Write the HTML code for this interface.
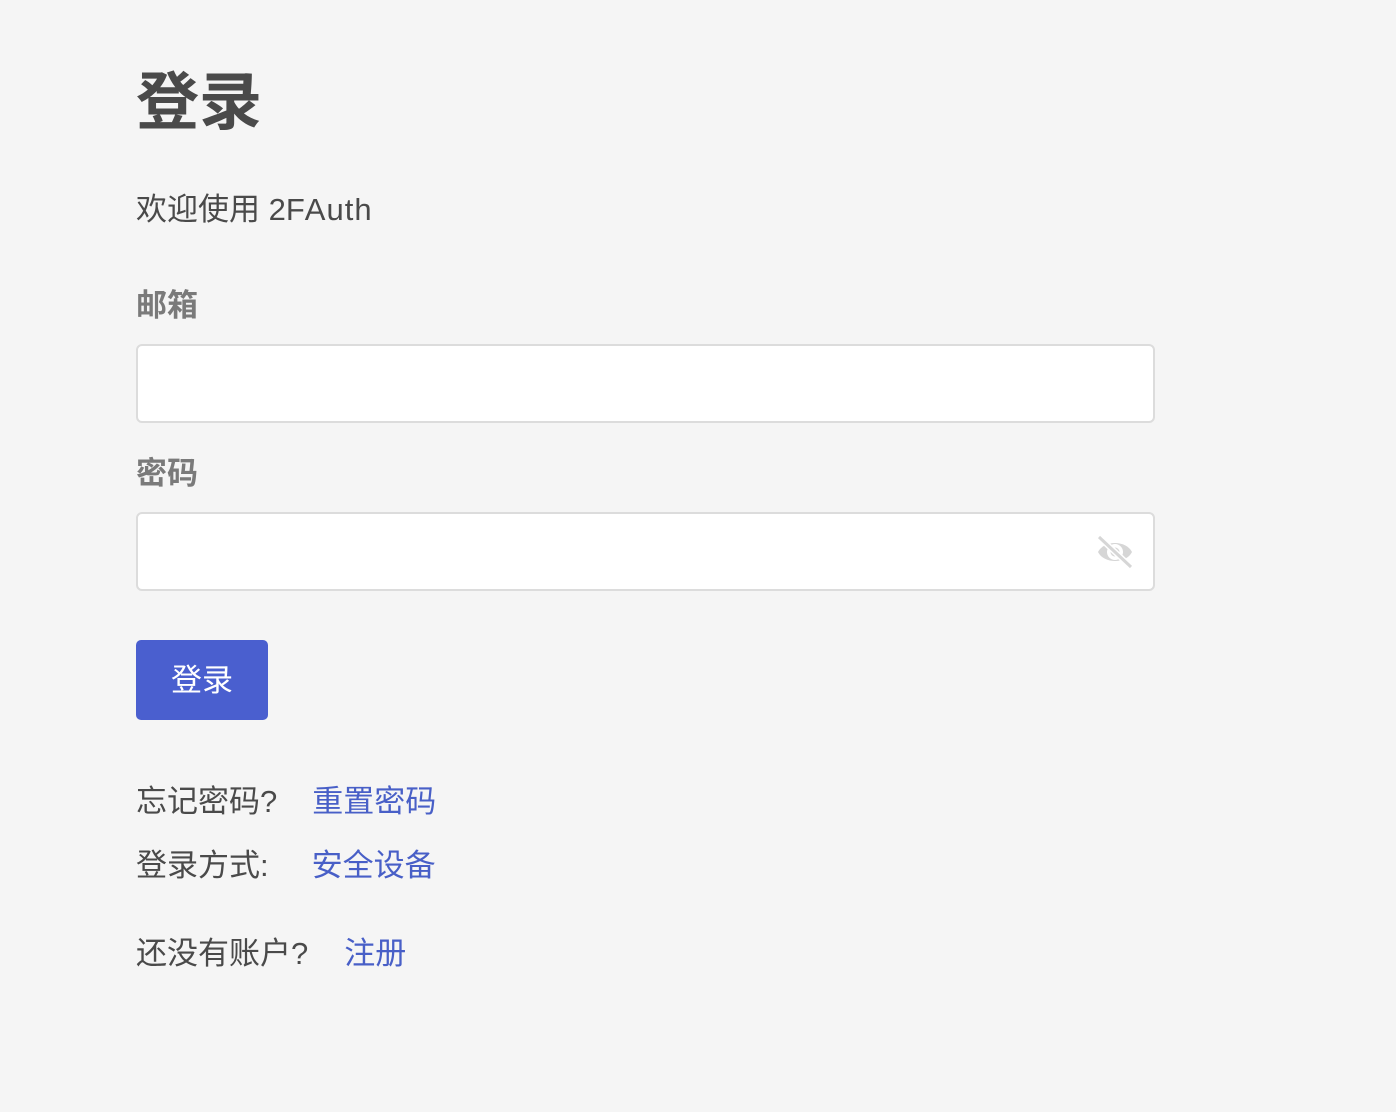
<!DOCTYPE html>
<html><head><meta charset="utf-8"><style>
body{margin:0;background:#f5f5f5;width:1396px;height:1112px;position:relative;font-family:"Liberation Sans","Noto Sans CJK SC",sans-serif;color:#4a4a4a;overflow:hidden}
.a{position:absolute;white-space:nowrap}
h1{position:absolute;left:136px;top:63px;margin:0;font-size:63px;line-height:80px;font-weight:bold;color:#4a4a4a}
.t{font-size:31px;line-height:40px}
.lbl{font-size:31px;line-height:40px;font-weight:bold;color:#7a7a7a}
.in{position:absolute;left:136px;width:1015px;height:75px;background:#fff;border:2px solid #dcdcdc;border-radius:6px}
.btn{position:absolute;left:136px;top:640px;width:132px;height:80px;background:#4a5fcf;border-radius:5px;color:#fff;font-size:31px;line-height:80px;text-align:center}
.l{color:#485fc7}
</style></head><body>
<h1>登录</h1>
<div class="a t" style="left:136px;top:190px">欢迎使用 2F<span style="letter-spacing:1px">Auth</span></div>
<div class="a lbl" style="left:136px;top:286px">邮箱</div>
<div class="in" style="top:344px"></div>
<div class="a lbl" style="left:136px;top:454px">密码</div>
<div class="in" style="top:512px"></div>
<svg class="a" style="left:1094px;top:534px" width="42" height="36" viewBox="0 0 42 36">
<path d="M4 18 C10 6 32 6 38 18 C32 30 10 30 4 18Z" fill="#d6d6d6"/>
<circle cx="21" cy="18" r="8" fill="#fff"/><circle cx="21" cy="18" r="4.5" fill="#d6d6d6"/>
<line x1="5" y1="3" x2="37" y2="33" stroke="#fff" stroke-width="6"/>
<line x1="5" y1="3" x2="37" y2="33" stroke="#d6d6d6" stroke-width="3"/>
</svg>
<div class="btn" style="line-height:82px">登录</div>
<div class="a t" style="left:136px;top:782px">忘记密码?<span class="l" style="margin-left:35px">重置密码</span></div>
<div class="a t" style="left:136px;top:846px">登录方式:<span class="l" style="margin-left:43px">安全设备</span></div>
<div class="a t" style="left:136px;top:934px">还没有账户?<span class="l" style="margin-left:36px">注册</span></div>
</body></html>
